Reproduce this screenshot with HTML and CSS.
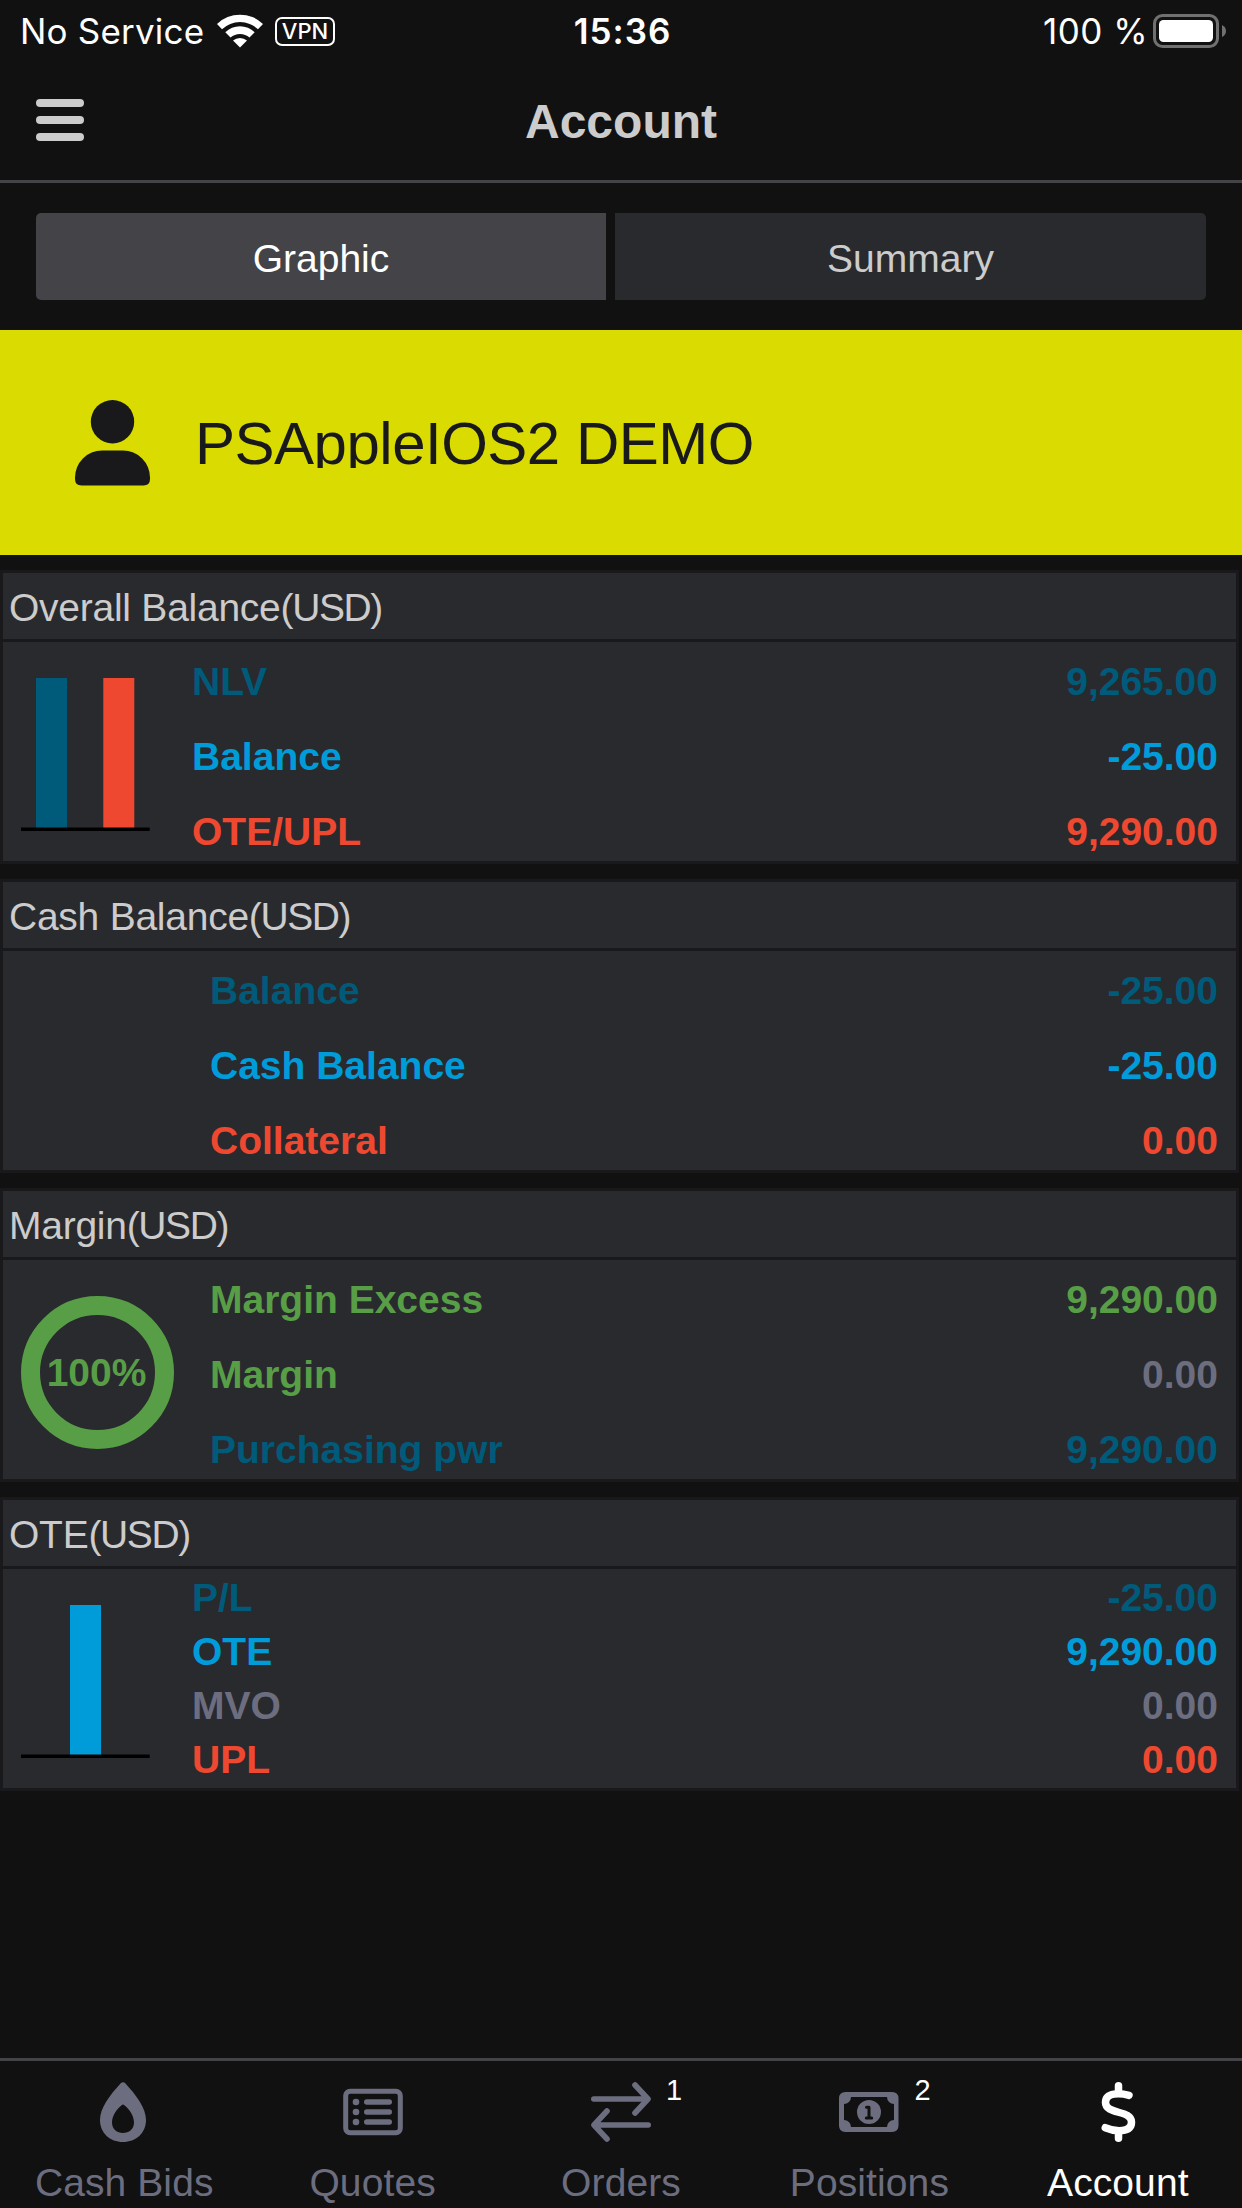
FILE: index.html
```
<!DOCTYPE html>
<html lang="en">
<head>
    <meta charset="utf-8">
    <title>Account</title>
    <link rel="stylesheet" href="styles.css">
</head>
<body>
    <div class="status-bar">
        <div class="status-left">
            <span class="carrier">No Service</span>
            <svg class="wifi" width="46" height="34" viewBox="0 0 46 34">
                <path d="M0 10 A33 33 0 0 1 46 10 L41 15.300 A26 26 0 0 0 5 15.300 Z"/>
                <path d="M8.300 18.300 A21 21 0 0 1 37.700 18.300 L32.500 23.600 A14 14 0 0 0 13.500 23.600 Z"/>
                <path d="M16 26.600 A10.500 10.500 0 0 1 30 26.600 L23 33.500 Z"/>
            </svg>
            <span class="vpn">VPN</span>
        </div>
        <span class="time">15:36</span>
        <div class="status-right">
            <span class="percent">100 %</span>
            <svg class="battery" width="74" height="34" viewBox="0 0 74 34">
                <rect x="1.500" y="1.500" width="63" height="31" rx="8" fill="none" stroke="#707070" stroke-width="3"/>
                <rect x="6" y="6" width="54" height="22" rx="4.500" fill="#fff"/>
                <path d="M69 11 Q73 13 73 17 Q73 21 69 23 Z" fill="#707070"/>
            </svg>
        </div>
    </div>

    <header class="header">
        <div class="menu">
            <i></i>
            <i></i>
            <i></i>
        </div>
        <h1>Account</h1>
    </header>

    <div class="segments">
        <div class="segment active">Graphic</div>
        <div class="segment">Summary</div>
    </div>

    <div class="user">
        <svg class="person" width="75" height="86" viewBox="0 0 75 86">
            <circle cx="37.500" cy="21.700" r="21.700"/>
            <path d="M27 50.500 H48 A27 27 0 0 1 75 77.500 V79 Q75 85.500 68.500 85.500 H6.500 Q0 85.500 0 79 V77.500 A27 27 0 0 1 27 50.500 Z"/>
        </svg>
        <span class="user-name">PSAppleIOS2 DEMO</span>
    </div>

    <main class="cards">
        <section class="card">
            <h2>Overall Balance<span class="currency">(USD)</span></h2>
            <div class="card-body">
                <div class="chart">
                    <svg width="129" height="153" viewBox="0 0 129 153">
                        <rect class="fill-navy" x="15" y="0" width="31" height="150"/>
                        <rect class="fill-red" x="82.300" y="0" width="31" height="150"/>
                        <rect x="0" y="149.500" width="128.700" height="3.500"/>
                    </svg>
                </div>
                <div class="rows">
                    <div class="row navy"><span>NLV</span><span>9,265.00</span></div>
                    <div class="row blue"><span>Balance</span><span>-25.00</span></div>
                    <div class="row red"><span>OTE/UPL</span><span>9,290.00</span></div>
                </div>
            </div>
        </section>

        <section class="card">
            <h2>Cash Balance<span class="currency">(USD)</span></h2>
            <div class="card-body">
                <div class="chart wide"></div>
                <div class="rows">
                    <div class="row navy"><span>Balance</span><span>-25.00</span></div>
                    <div class="row blue"><span>Cash Balance</span><span>-25.00</span></div>
                    <div class="row red"><span>Collateral</span><span>0.00</span></div>
                </div>
            </div>
        </section>

        <section class="card">
            <h2>Margin<span class="currency">(USD)</span></h2>
            <div class="card-body">
                <div class="chart wide">
                    <div class="ring">100%</div>
                </div>
                <div class="rows">
                    <div class="row green"><span>Margin Excess</span><span>9,290.00</span></div>
                    <div class="row green"><span>Margin</span><span class="gray">0.00</span></div>
                    <div class="row navy"><span>Purchasing pwr</span><span>9,290.00</span></div>
                </div>
            </div>
        </section>

        <section class="card">
            <h2>OTE<span class="currency">(USD)</span></h2>
            <div class="card-body">
                <div class="chart">
                    <svg width="129" height="153" viewBox="0 0 129 153">
                        <rect class="fill-blue" x="49" y="0" width="31" height="150"/>
                        <rect x="0" y="149.500" width="128.700" height="3.500"/>
                    </svg>
                </div>
                <div class="rows compact">
                    <div class="row navy"><span>P/L</span><span>-25.00</span></div>
                    <div class="row blue"><span>OTE</span><span>9,290.00</span></div>
                    <div class="row gray"><span>MVO</span><span>0.00</span></div>
                    <div class="row red"><span>UPL</span><span>0.00</span></div>
                </div>
            </div>
        </section>
    </main>

    <nav class="tabs">
        <div class="tab">
            <div class="icon">
                <svg width="60" height="60" viewBox="0 0 60 60">
                    <path fill="currentColor" fill-rule="evenodd" d="M26.500 1.500 Q29 -1 31.500 1.500 C42 13 52 26 52 38 C52 51 42 60 29 60 C16 60 6 51 6 38 C6 26 16 13 26.500 1.500 Z M27.600 23.200 Q29 21.800 30.400 23.200 C36 28 40 34 40 40.500 C40 47 35 51 29 51 C23 51 18 47 18 40.500 C18 34 22 28 27.600 23.200 Z"/>
                </svg>
            </div>
            <span>Cash Bids</span>
        </div>
        <div class="tab">
            <div class="icon">
                <svg width="60" height="60" viewBox="0 0 60 60">
                    <rect x="2.700" y="9.200" width="54.600" height="41.600" rx="4.500" fill="none" stroke="currentColor" stroke-width="5"/>
                    <g fill="currentColor">
                        <circle cx="13" cy="20" r="3.300"/>
                        <circle cx="13" cy="30" r="3.300"/>
                        <circle cx="13" cy="40" r="3.300"/>
                        <rect x="21" y="17.200" width="28" height="5.600" rx="2.800"/>
                        <rect x="21" y="27.200" width="28" height="5.600" rx="2.800"/>
                        <rect x="21" y="37.200" width="28" height="5.600" rx="2.800"/>
                    </g>
                </svg>
            </div>
            <span>Quotes</span>
        </div>
        <div class="tab">
            <div class="icon">
                <svg width="60" height="60" viewBox="0 0 60 60">
                    <g fill="none" stroke="currentColor" stroke-width="5.600" stroke-linecap="round" stroke-linejoin="round">
                        <path d="M2.800 17 H56.500 M44 3 L57 17 L44 31"/>
                        <path d="M57.200 43 H3.500 M16 29 L3 43 L16 57"/>
                    </g>
                </svg>
                <b class="badge">1</b>
            </div>
            <span>Orders</span>
        </div>
        <div class="tab">
            <div class="icon">
                <svg width="60" height="60" viewBox="0 0 60 60">
                    <path fill="currentColor" fill-rule="evenodd" d="M6.500 10 H53 Q59.500 10 59.500 16.500 V43.500 Q59.500 50 53 50 H6.500 Q0 50 0 43.500 V16.500 Q0 10 6.500 10 Z M12 15 A7 7 0 0 1 5 22 V38 A7 7 0 0 1 12 45 H48 A7 7 0 0 1 55 38 V22 A7 7 0 0 1 48 15 Z"/>
                    <circle cx="30" cy="30" r="12" fill="currentColor"/>
                    <path d="M27.500 25.300 H30 V36 M27.300 36 H32.700" fill="none" stroke="#111" stroke-width="3" stroke-linecap="round" stroke-linejoin="round"/>
                </svg>
                <b class="badge">2</b>
            </div>
            <span>Positions</span>
        </div>
        <div class="tab active">
            <div class="icon">
                <svg width="60" height="60" viewBox="0 0 60 60">
                    <g fill="none" stroke="currentColor" stroke-width="7.500" stroke-linecap="round" stroke-linejoin="round">
                        <path d="M30.500 3.800 V11 M30.500 50 V56.200"/>
                        <path d="M41 13.300 C32.500 11 17.500 10 17.500 20.500 C17.500 33 43.500 27.500 43.500 40 C43.500 51 27.500 50 17.300 45.700"/>
                    </g>
                </svg>
            </div>
            <span>Account</span>
        </div>
    </nav>
</body>
</html>
```
FILE: styles.css
```
* {
    box-sizing: border-box;
}

body {
    margin: 0;
    width: 1242px;
    height: 2208px;
    display: flex;
    flex-direction: column;
    overflow: hidden;
    background: #111111;
    color: #cccccc;
    font-family: "Liberation Sans", Arial, sans-serif;
    font-size: 39px;
}

svg {
    display: block;
}

/* status bar */
.status-bar {
    display: grid;
    grid-template-columns: 1fr auto 1fr;
    align-items: center;
    height: 60px;
    padding: 0 15px 0 20px;
    color: #ffffff;
    font-family: Inter, sans-serif;
    font-size: 35px;
    line-height: 62px;
}

.status-left,
.status-right {
    display: flex;
    align-items: center;
}

.status-right {
    justify-content: flex-end;
}

.carrier {
    width: 197px;
    letter-spacing: 0.2px;
    white-space: nowrap;
}

.wifi {
    fill: #ffffff;
}

.vpn {
    width: 60px;
    height: 29px;
    margin-left: 12px;
    border: 2px solid #ffffff;
    border-radius: 7px;
    font-size: 22px;
    font-weight: 500;
    line-height: 25px;
    text-align: center;
}

.time {
    margin-right: 2px;
    font-weight: 600;
    letter-spacing: 1px;
}

.percent {
    margin-right: 5px;
    letter-spacing: 0.5px;
}

/* header */
.header {
    display: grid;
    grid-template-columns: 1fr auto 1fr;
    align-items: center;
    height: 123px;
    padding: 0 36px;
    border-bottom: 3px solid #434348;
}

.menu {
    display: flex;
    flex-direction: column;
    gap: 9px;
}

.menu i {
    width: 48px;
    height: 8px;
    border-radius: 4px;
    background: #cccccc;
}

h1 {
    margin: 0;
    padding-top: 2px;
    font-size: 48px;
    font-weight: bold;
}

/* segmented control */
.segments {
    display: flex;
    gap: 9px;
    padding: 30px 36px;
}

.segment {
    width: 591px;
    height: 87px;
    border-radius: 0 5px 5px 0;
    background: #292a2e;
    line-height: 91px;
    text-align: center;
}

.segment.active {
    width: 570px;
    border-radius: 5px 0 0 5px;
    background: #434348;
    color: #ffffff;
}

/* user banner */
.user {
    display: flex;
    align-items: center;
    height: 225px;
    padding-left: 75px;
    background: #dadb00;
    color: #19191b;
}

.person {
    fill: #19191b;
}

.user-name {
    height: 50px;
    margin-left: 45px;
    overflow: hidden;
    font-size: 60px;
    letter-spacing: -0.5px;
    line-height: 52px;
}

/* cards */
.cards {
    display: flex;
    flex: 1;
    flex-direction: column;
    gap: 15px;
    padding: 15px 3px 0 0;
}

.card {
    height: 294px;
    border: 3px solid #19191b;
    background: #292a2e;
}

.card h2 {
    height: 69px;
    margin: 0;
    padding-left: 6px;
    border-bottom: 3px solid #19191b;
    font-size: 39px;
    font-weight: normal;
    letter-spacing: -0.25px;
    line-height: 69px;
}

.currency {
    letter-spacing: -1.4px;
}

.card-body {
    display: flex;
    height: 219px;
}

.chart {
    display: flex;
    align-items: center;
    width: 189px;
    padding: 5px 0 0 18px;
}

.chart.wide {
    width: 207px;
}

.ring {
    width: 153px;
    height: 153px;
    border: 19px solid #589e46;
    border-radius: 50%;
    color: #589e46;
    font-weight: bold;
    line-height: 115px;
    text-align: center;
    text-indent: -2px;
}

.rows {
    flex: 1;
    padding: 2px 18px 0 0;
    font-weight: bold;
    line-height: 75px;
}

.rows.compact {
    line-height: 54px;
}

.row {
    display: flex;
    justify-content: space-between;
}

.navy {
    color: #005a7a;
}

.blue {
    color: #009cd9;
}

.red {
    color: #ee4930;
}

.green {
    color: #589e46;
}

.gray {
    color: #6c6e80;
}

.fill-navy {
    fill: #005a7a;
}

.fill-blue {
    fill: #009cd9;
}

.fill-red {
    fill: #ee4930;
}

/* bottom tabs */
.tabs {
    display: flex;
    height: 150px;
    border-top: 3px solid #434348;
}

.tab {
    display: flex;
    flex: 1;
    flex-direction: column;
    align-items: center;
    padding-top: 21px;
    color: #6c6e80;
    letter-spacing: 0.1px;
    line-height: 45px;
}

.tab.active {
    color: #ffffff;
}

.icon {
    position: relative;
    margin-bottom: 18px;
}

.badge {
    position: absolute;
    top: -8px;
    left: 75px;
    color: #ffffff;
    font-size: 29px;
    font-weight: normal;
    line-height: 32px;
}
```
